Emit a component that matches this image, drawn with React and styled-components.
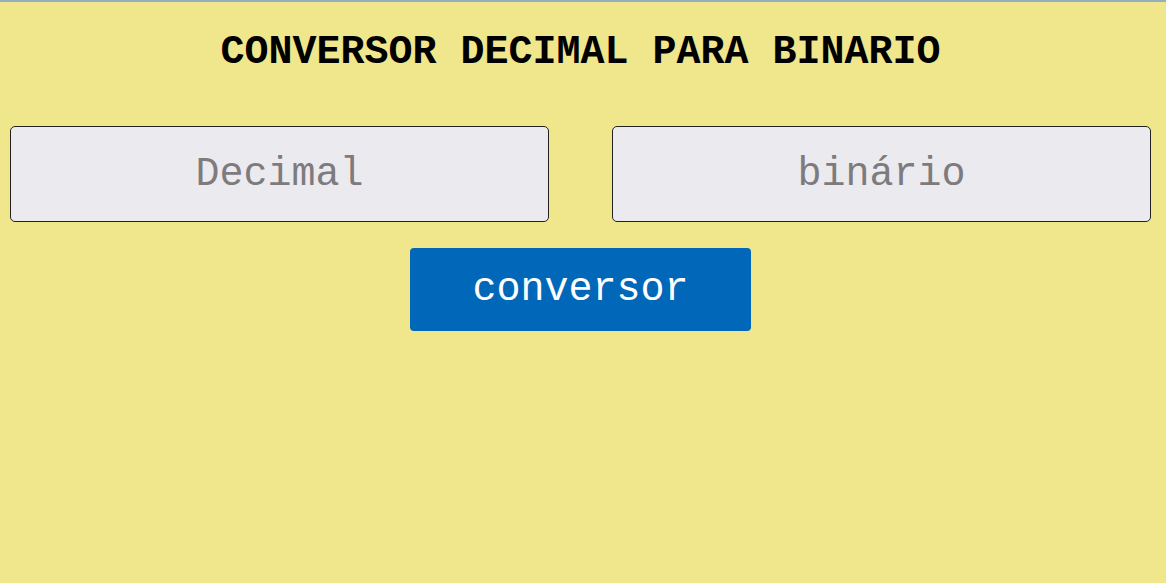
import React from 'react'
import styled, { createGlobalStyle } from 'styled-components'

const mono = `"Courier New", "Nimbus Mono PS", "Nimbus Mono L", FreeMono, "Liberation Mono", monospace`

const GlobalStyle = createGlobalStyle`
  html, body {
    margin: 0;
    padding: 0;
    background: #f0e68c;
  }
  body {
    font-family: ${mono};
    border-top: 2px solid #93adc2;
    min-height: 581px;
  }
`

const Page = styled.main`
  width: 1141px;
  margin-left: 10px;
  display: flex;
  flex-direction: column;
  align-items: center;
  padding-top: 31px;
`

const Title = styled.h1`
  margin: 0;
  font-size: 40px;
  line-height: 40px;
  font-weight: bold;
  color: #000;
`

const Fields = styled.div`
  margin-top: 53px;
  width: 100%;
  display: grid;
  grid-template-columns: 539px 539px;
  justify-content: space-between;
`

const Field = styled.input`
  box-sizing: border-box;
  height: 96px;
  width: 100%;
  border: 1px solid #222;
  border-radius: 5px;
  background: #ebeaef;
  font-family: ${mono};
  font-size: 40px;
  text-align: center;
  outline: none;
  color: #222;
  &::placeholder {
    color: #7d7b7d;
  }
`

const Button = styled.button`
  margin-top: 26px;
  width: 341px;
  height: 83px;
  border: none;
  border-radius: 4px;
  background: #0067b9;
  color: #fff;
  font-family: ${mono};
  font-size: 40px;
  cursor: pointer;
`

export default function App() {
  return (
    <>
      <GlobalStyle />
      <Page>
        <Title>CONVERSOR DECIMAL PARA BINARIO</Title>
        <Fields>
          <Field type="text" placeholder="Decimal" />
          <Field type="text" placeholder="binário" readOnly />
        </Fields>
        <Button type="button">conversor</Button>
      </Page>
    </>
  )
}
